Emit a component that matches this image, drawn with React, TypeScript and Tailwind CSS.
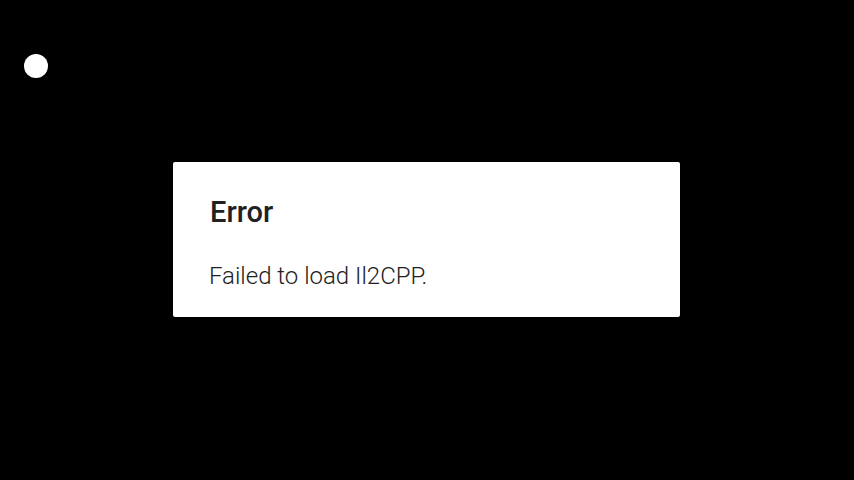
export default function App() {
  return (
    <div className="w-[854px] h-[480px] bg-black relative overflow-hidden" style={{ fontFamily: "Roboto, sans-serif" }}>
      <div className="absolute left-[24px] top-[54px] w-[24px] h-[24px] rounded-full bg-white" />
      <div className="flex h-full items-center justify-center pr-[1px]">
        <div className="w-[507px] h-[155px] bg-white rounded-[2px] pl-[37px] pr-[36px] pt-[34px] mt-[-1px]">
          <div className="text-[29px] font-medium text-[#212121] leading-[32px]">Error</div>
          <div className="mt-[34px] -ml-[1px] text-[24px] font-light text-[#212121] leading-[28px]">Failed to load Il2CPP.</div>
        </div>
      </div>
    </div>
  );
}
